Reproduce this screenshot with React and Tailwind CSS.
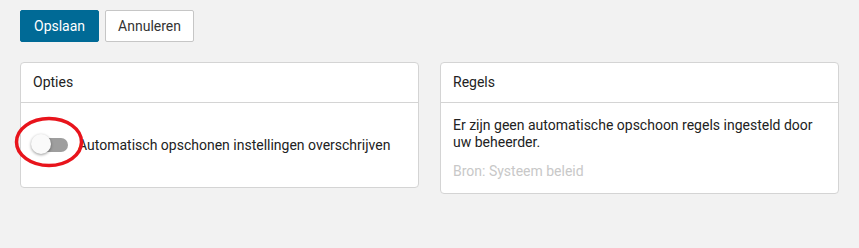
import React, { useState } from 'react';

const Card = ({ title, children, className = '' }) => (
  <div className={`bg-white border border-[#d4d4d4] rounded-[4px] ${className}`}>
    <div className="px-[12px] py-[11px] border-b border-[#d4d4d4] leading-[17px]">{title}</div>
    {children}
  </div>
);

const App = () => {
  const [override, setOverride] = useState(false);

  return (
    <div className="min-h-[248px] bg-[#f2f2f2] px-5 pt-[10px] text-[14px] text-[#222] font-['Roboto',sans-serif]">
      <div className="flex gap-[6px]">
        <button className="h-8 px-[13px] rounded-[2px] bg-[#006a96] border border-[#006a96] text-white">Opslaan</button>
        <button className="h-8 px-3 rounded-[2px] bg-white border border-[#c6c6c6] text-[#333]">Annuleren</button>
      </div>

      <div className="grid grid-cols-2 gap-[21px] mt-5 items-start">
        <Card title="Opties">
          <div className="px-[13px] py-[14px]">
            <div className="relative h-14 flex items-center">
              <button
                onClick={() => setOverride(!override)}
                className={`relative w-[34px] h-[14px] rounded-full shrink-0 ${override ? 'bg-[#7fb3cb]' : 'bg-[#9e9e9e]'}`}
              >
                <span
                  className={`absolute top-[-4px] w-5 h-5 rounded-full shadow-[0_1px_3px_rgba(0,0,0,0.4)] ${override ? 'left-[17px] bg-[#006a96]' : 'left-[-3px] bg-[#fafafa]'}`}
                />
              </button>
              <span className="ml-[10px] leading-[17px]">Automatisch opschonen instellingen overschrijven</span>
              <svg className="absolute left-[-20px] top-[-2px] pointer-events-none" width="72" height="54" viewBox="0 0 72 54">
                <ellipse cx="35" cy="27" rx="32.5" ry="23.5" fill="none" stroke="#e8141c" strokeWidth="3.5" />
              </svg>
            </div>
          </div>
        </Card>

        <Card title="Regels">
          <div className="px-[12px] pt-[14px] pb-[13px] leading-[17px]">
            <p>Er zijn geen automatische opschoon regels ingesteld door uw beheerder.</p>
            <p className="mt-[12px] text-[#c8c8c8]">Bron: Systeem beleid</p>
          </div>
        </Card>
      </div>
    </div>
  );
};

export default App;
